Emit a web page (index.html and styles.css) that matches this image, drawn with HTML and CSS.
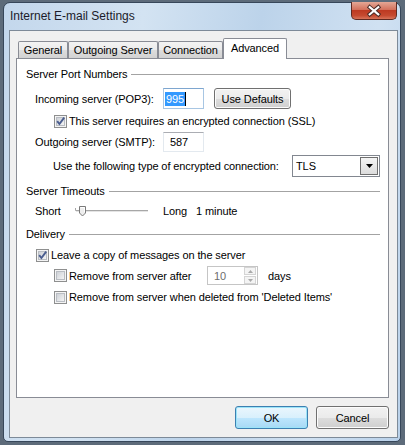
FILE: index.html
```html
<!DOCTYPE html>
<html lang="en">
<head>
  <meta charset="UTF-8" />
  <title>Internet E-mail Settings</title>
  <link rel="stylesheet" href="styles.css">
</head>
<body>

  <!-- Shared checkbox glyphs -->
  <svg class="defs" width="0" height="0">
    <defs>
      <linearGradient id="boxFill" x1="0" y1="0" x2="1" y2="1">
        <stop offset="0" stop-color="#cbcfd5"/>
        <stop offset="1" stop-color="#f6f6f6"/>
      </linearGradient>
      <symbol id="box" viewBox="0 0 13 13">
        <rect x="0.5" y="0.5" width="12" height="12" fill="#f4f4f4" stroke="#8e8f8f"/>
        <rect x="2.5" y="2.5" width="8" height="8" fill="url(#boxFill)" stroke="#b9bdc3"/>
      </symbol>
      <symbol id="boxOn" viewBox="0 0 13 13">
        <rect x="0.5" y="0.5" width="12" height="12" fill="#f4f4f4" stroke="#8e8f8f"/>
        <rect x="2.5" y="2.5" width="8" height="8" fill="url(#boxFill)" stroke="#b9bdc3"/>
        <path d="M3.2 6.2 L5.4 9 L10.2 2.6" fill="none" stroke="#4a5d8f" stroke-width="1.9"/>
      </symbol>
    </defs>
  </svg>

  <div class="window">
    <!-- Title bar -->
    <div class="titlebar">
      <span class="title">Internet E-mail Settings</span>
      <div class="close">
        <svg width="46" height="18" viewBox="0 0 46 18">
          <path d="M18.5 5 L27.5 12.5 M27.5 5 L18.5 12.5" stroke="#4b2b26" stroke-width="4.2" stroke-linecap="square"/>
          <path d="M18.5 5 L27.5 12.5 M27.5 5 L18.5 12.5" stroke="#ffffff" stroke-width="2.2" stroke-linecap="square"/>
        </svg>
      </div>
    </div>

    <div class="client">
      <!-- Tabs -->
      <div class="tabs">
        <div class="tab t-general">General</div>
        <div class="tab t-outgoing">Outgoing Server</div>
        <div class="tab t-connection">Connection</div>
        <div class="tab active t-advanced">Advanced</div>
      </div>

      <div class="panel">
        <div class="group g-first"><span>Server Port Numbers</span><i class="rule"></i></div>

        <div class="row r-incoming">
          <span class="label">Incoming server (POP3):</span>
          <div class="field f-tall"><span class="selected">995</span><span class="caret"></span></div>
          <button class="btn defaults">Use Defaults</button>
        </div>

        <div class="row r-check r-ssl">
          <svg class="check" width="13" height="13"><use href="#boxOn"/></svg>
          <span>This server requires an encrypted connection (SSL)</span>
        </div>

        <div class="row r-smtp">
          <span class="label">Outgoing server (SMTP):</span>
          <div class="field"><span class="value">587</span></div>
        </div>

        <div class="row r-encrypt">
          <span class="label wide">Use the following type of encrypted connection:</span>
          <div class="select">
            <span>TLS</span>
            <span class="drop">
              <svg width="7" height="4" viewBox="0 0 7 4"><path d="M0 0 H7 L3.5 4 Z" fill="#000"/></svg>
            </span>
          </div>
        </div>

        <div class="group g-timeout"><span>Server Timeouts</span><i class="rule"></i></div>

        <div class="row r-slider">
          <span class="short">Short</span>
          <svg class="slider" width="74" height="14" viewBox="0 0 74 14">
            <path d="M0.5 4 V6.5 H73" fill="none" stroke="#a7a7a7"/>
            <path d="M1 7.5 H73" fill="none" stroke="#e4e4e4"/>
            <path d="M4.5 2.5 H10.5 V9 L7.5 12 L4.5 9 Z" fill="#eeeeee" stroke="#7a7a7a"/>
            <path d="M5.5 3.5 H9.5 V8" fill="none" stroke="#ffffff"/>
          </svg>
          <span class="long">Long</span>
          <span>1 minute</span>
        </div>

        <div class="group g-delivery"><span>Delivery</span><i class="rule"></i></div>

        <div class="row r-check r-leave">
          <svg class="check" width="13" height="13"><use href="#boxOn"/></svg>
          <span>Leave a copy of messages on the server</span>
        </div>

        <div class="row r-check r-after">
          <svg class="check" width="13" height="13"><use href="#box"/></svg>
          <span class="after-label">Remove from server after</span>
          <div class="spinner">
            <span class="num">10</span>
            <span class="arrows">
              <span class="arrow"><svg width="5" height="3" viewBox="0 0 5 3"><path d="M0 3 H5 L2.5 0 Z" fill="#a9a9a9"/></svg></span>
              <span class="arrow"><svg width="5" height="3" viewBox="0 0 5 3"><path d="M0 0 H5 L2.5 3 Z" fill="#a9a9a9"/></svg></span>
            </span>
          </div>
          <span class="days">days</span>
        </div>

        <div class="row r-check r-deleted">
          <svg class="check" width="13" height="13"><use href="#box"/></svg>
          <span>Remove from server when deleted from 'Deleted Items'</span>
        </div>
      </div>

      <!-- Dialog buttons -->
      <div class="actions">
        <button class="btn default">OK</button>
        <button class="btn">Cancel</button>
      </div>
    </div>
  </div>

</body>
</html>
```

FILE: styles.css
```css
/* Windows 7 style dialog */
body {
  margin: 0;
  background: #5d6b7a;
  font-family: "Liberation Sans", Arial, sans-serif;
  font-size: 11px;
  letter-spacing: -0.1px;
  color: #000;
}

.defs {
  position: absolute;
}

.window {
  box-sizing: border-box;
  width: 398px;
  height: 440px;
  margin: 2px 0 0 3px;
  padding: 0 2px 3px 5px;
  border: 1px solid #37475a;
  border-radius: 7px 7px 5px 5px;
  background: linear-gradient(100deg, #c3d7ec 0%, #d3e3f2 30%, #bcd3ea 55%, #d0e1f2 80%, #b9d1ea 100%);
  display: flex;
  flex-direction: column;
}

/* Title bar */
.titlebar {
  height: 27px;
  display: flex;
  align-items: flex-start;
  justify-content: space-between;
}

.title {
  margin: 6px 0 0 1px;
  font-size: 12px;
  letter-spacing: 0;
  line-height: 14px;
  color: #1b1b2a;
}

.close {
  width: 46px;
  height: 18px;
  margin: -1px 1px 0 0;
  border: 1px solid #5e2a22;
  border-top: none;
  box-sizing: border-box;
  border-radius: 0 0 5px 5px;
  background: linear-gradient(#e4a795 0%, #d4715c 45%, #bd3a22 50%, #c54a30 80%, #d8745a 100%);
  display: flex;
}

/* Client area */
.client {
  flex: 1;
  border: 1px solid #7d8a98;
  background: #f0f0f0;
  padding: 7px 8px 8px 6px;
  display: flex;
  flex-direction: column;
}

.tabs {
  height: 20px;
  margin-left: 2px;
  display: flex;
  align-items: flex-end;
}

.tab {
  box-sizing: border-box;
  height: 17px;
  border: 1px solid #898c95;
  border-bottom: none;
  border-radius: 2px 2px 0 0;
  background: linear-gradient(#f3f3f3 0%, #ebebeb 50%, #dddddd 51%, #d2d2d2 100%);
  text-align: center;
  line-height: 17px;
}

.t-general { width: 50px; }
.t-outgoing { width: 90px; }
.t-connection { width: 65px; }

.tab.active {
  width: 64px;
  height: 21px;
  margin-bottom: -1px;
  background: #fff;
  line-height: 18px;
  position: relative;
  z-index: 1;
}

.panel {
  box-sizing: border-box;
  height: 340px;
  border: 1px solid #898c95;
  background: #fff;
  padding: 8px 8px 0 9px;
}

/* Group headers with etched rule */
.group {
  height: 14px;
  display: flex;
  align-items: center;
  line-height: 14px;
}

.rule {
  flex: 1;
  margin-left: 4px;
  border-top: 1px solid #a3a3a3;
}

.g-timeout { margin-top: 7px; }
.g-delivery { margin-top: 9px; }

.row {
  display: flex;
  align-items: center;
  line-height: 14px;
}

.label {
  width: 128px;
  flex-shrink: 0;
}

.label.wide {
  width: 239px;
}

.r-incoming { margin: 7px 0 0 9px; height: 21px; }
.r-ssl { margin: 5px 0 0 28px; height: 14px; }
.r-smtp { margin: 4px 0 0 9px; height: 20px; }
.r-encrypt { margin: 3px 0 0 27px; height: 22px; }
.r-slider { margin: 6px 0 0 9px; height: 14px; }
.r-leave { margin: 7px 0 0 10px; height: 14px; }
.r-after { margin: 4px 0 0 28px; height: 19px; }
.r-deleted { margin: 5px 0 0 28px; height: 14px; }

.check {
  flex-shrink: 0;
  margin-right: 2px;
}

/* Text boxes */
.field {
  box-sizing: border-box;
  width: 41px;
  height: 20px;
  border: 1px solid #e3e9ef;
  border-top-color: #abadb3;
  background: #fff;
  display: flex;
  align-items: center;
  padding-left: 1px;
}

.field.f-tall {
  height: 21px;
  border-color: #a8c6e3;
  border-top-color: #7ea6cf;
}

.selected {
  background: #3399ff;
  color: #fff;
  padding: 0 1px;
  line-height: 14px;
}

.caret {
  width: 1px;
  height: 14px;
  background: #000;
}

.value {
  padding-left: 5px;
}

/* Push buttons */
.btn {
  box-sizing: border-box;
  height: 23px;
  width: 73px;
  padding: 0;
  border: 1px solid #707070;
  border-radius: 3px;
  background: linear-gradient(#f2f2f2 0%, #ebebeb 50%, #dddddd 51%, #cfcfcf 100%);
  box-shadow: inset 0 0 0 1px #fcfcfc;
  font-family: "Liberation Sans", Arial, sans-serif;
  font-size: 11px;
  letter-spacing: -0.1px;
  color: #000;
}

.btn.defaults {
  width: 77px;
  height: 21px;
  margin-left: 10px;
}

.btn.default {
  border-color: #3c7fb1;
  background: linear-gradient(#eaf6fd 0%, #d9f0fc 50%, #bee6fd 51%, #a7d9f5 100%);
  box-shadow: inset 0 0 0 1px #9be4f8;
}

/* Drop-down list */
.select {
  box-sizing: border-box;
  width: 88px;
  height: 22px;
  border: 1px solid #828790;
  background: #fff;
  display: flex;
  align-items: center;
  justify-content: space-between;
  padding: 0 1px 0 3px;
}

.drop {
  box-sizing: border-box;
  width: 18px;
  height: 18px;
  border: 1px solid #6f6f6f;
  background: linear-gradient(#f4f4f4, #dcdcdc);
  display: flex;
  align-items: center;
  justify-content: center;
}

/* Track bar */
.short {
  width: 40px;
}

.long {
  margin-left: 14px;
  width: 33px;
}

/* Spin box (disabled) */
.after-label {
  width: 138px;
}

.spinner {
  box-sizing: border-box;
  width: 51px;
  height: 19px;
  border: 1px solid #c5c5c5;
  background: #fff;
  display: flex;
  align-items: center;
  justify-content: space-between;
}

.num {
  padding-left: 6px;
  color: #6d6d6d;
}

.arrows {
  display: flex;
  flex-direction: column;
  gap: 1px;
  margin-right: 1px;
}

.arrow {
  box-sizing: border-box;
  width: 12px;
  height: 8px;
  border: 1px solid #d4d4d4;
  background: #f4f4f4;
  display: flex;
  align-items: center;
  justify-content: center;
}

.days {
  margin-left: 10px;
}

.actions {
  margin-top: 8px;
  display: flex;
  justify-content: flex-end;
  gap: 8px;
}
```
